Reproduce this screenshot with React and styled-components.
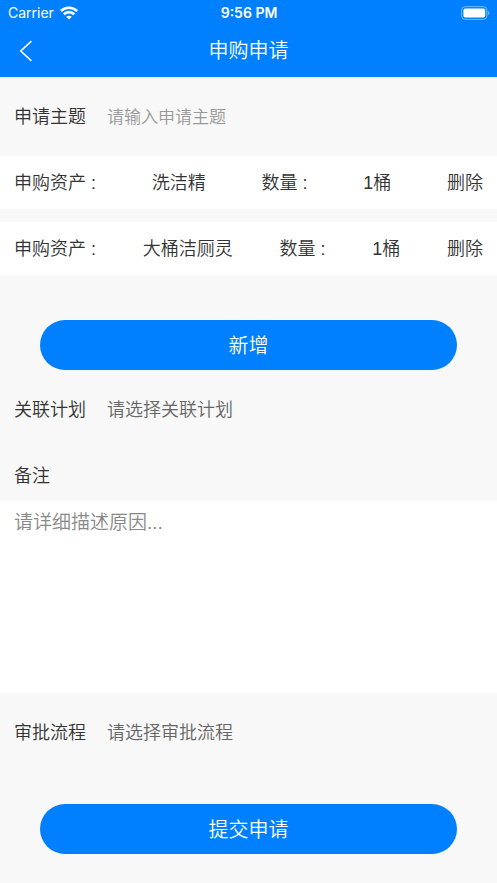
import { useState } from 'react';
import styled, { createGlobalStyle } from 'styled-components';



const GlobalStyle = createGlobalStyle`
    * {
        box-sizing: border-box;
    }
    body {
        margin: 0;
        background: #f8f8f8;
    }
    body, button, input, select, textarea {
        font-family: "Liberation Sans", "Noto Sans CJK SC", sans-serif;
        font-weight: 350;
        color: #333;
    }
`;

const Page = styled.div`
    display: flex;
    flex-direction: column;
    min-height: 100vh;
`;

const Header = styled.header`
    background: #0080ff;
    color: #fff;
`;

const StatusBar = styled.div`
    display: grid;
    grid-template-columns: 1fr auto 1fr;
    align-items: center;
    height: 25px;
    padding: 0 7px 0 8px;
    font-family: Inter, sans-serif;
    font-size: 14px;
    font-weight: 400;
    line-height: 20px;
`;

const Carrier = styled.div`
    display: flex;
    align-items: center;
    gap: 6px;
`;

const Time = styled.span`
    font-weight: 600;
`;

const BatteryIcon = styled.svg`
    justify-self: end;
`;

const NavBar = styled.div`
    display: grid;
    grid-template-columns: 52px 1fr 52px;
    align-items: center;
    height: 52px;
`;

const BackButton = styled.button`
    display: flex;
    justify-content: center;
    align-items: center;
    height: 100%;
    padding: 0;
    border: none;
    background: none;
    color: #fff;
`;

const Title = styled.h1`
    margin: 0;
    font-size: 20px;
    font-weight: 350;
    line-height: 28px;
    text-align: center;
`;

const Form = styled.form`
    display: flex;
    flex-direction: column;
    padding: 0 0 29px 0;
`;

const Field = styled.div`
    display: flex;
    align-items: center;
    gap: 21px;
    height: ${({ $short }) => $short ? '52px' : '79px'};
    padding: 1px 14px 0 14px;
`;

const Label = styled.label`
    flex: 0 0 auto;
    font-size: 18px;
    line-height: 26px;
`;

const TextInput = styled.input`
    flex: 1 1 auto;
    min-width: 0;
    padding: 1px 0 0 0;
    border: none;
    outline: none;
    background: none;
    font-size: 17px;
    line-height: 26px;
    &::placeholder {
        color: #999;
    }
`;

const Picker = styled.select`
    flex: 1 1 auto;
    min-width: 0;
    padding: 0;
    border: none;
    outline: none;
    appearance: none;
    background: none;
    color: #666;
    font-size: 18px;
    line-height: 26px;
`;

const AssetList = styled.ul`
    display: flex;
    flex-direction: column;
    gap: 13px;
    margin: 0;
    padding: 0;
    list-style: none;
`;

const AssetRow = styled.li`
    display: flex;
    justify-content: space-between;
    align-items: center;
    height: 53px;
    padding: 0 14px;
    background: #fff;
    font-size: 18px;
    line-height: 26px;
`;

const DeleteButton = styled.button`
    padding: 0;
    border: none;
    background: none;
    font-size: 18px;
    line-height: 26px;
`;

const MainButton = styled.button`
    height: 50px;
    margin: ${({ $top }) => $top}px 40px 0 40px;
    padding: 2px 0 0 0;
    border: none;
    border-radius: 25px;
    background: #0080ff;
    color: #fff;
    font-size: 20px;
    line-height: 28px;
`;

const Remark = styled.textarea`
    display: block;
    width: 100%;
    height: 192px;
    padding: 8px 14px;
    border: none;
    outline: none;
    resize: none;
    background: #fff;
    font-size: 19px;
    line-height: 28px;
    &::placeholder {
        color: #888;
    }
`;



const initialAssets = [
    { id: 1, name: '洗洁精', amount: '1桶' },
    { id: 2, name: '大桶洁厕灵', amount: '1桶' }
];

const App = () => {
    const [assets, setAssets] = useState(initialAssets);

    const removeAsset = id => setAssets(assets.filter(asset => asset.id !== id));

    return (
        <Page>
            <GlobalStyle />
            <Header>
                <StatusBar>
                    <Carrier>
                        Carrier
                        <svg width="18" height="14" viewBox="0 0 18 14" fill="none" stroke="#fff" strokeWidth="2.6">
                            <path d="M0.9 5C5.4 0.6 12.6 0.6 17.1 5" />
                            <path d="M3.7 8.3C6.7 5.4 11.3 5.4 14.3 8.3" />
                            <path d="M9 13.6L6.2 10.8C7.8 9.4 10.2 9.4 11.8 10.8Z" fill="#fff" stroke="none" />
                        </svg>
                    </Carrier>
                    <Time>9:56 PM</Time>
                    <BatteryIcon width="29" height="14" viewBox="0 0 29 14" fill="none">
                        <rect x="0.6" y="0.6" width="25.3" height="12.8" rx="3.6" stroke="#fff" strokeOpacity="0.45" />
                        <rect x="2.4" y="2.4" width="21.8" height="9.2" rx="2" fill="#fff" />
                        <path d="M27.2 4.8C28.9 5.6 28.9 8.4 27.2 9.2Z" fill="#fff" fillOpacity="0.5" />
                    </BatteryIcon>
                </StatusBar>
                <NavBar>
                    <BackButton type="button" aria-label="返回">
                        <svg width="14" height="22" viewBox="0 0 14 22" fill="none" stroke="currentColor" strokeWidth="1.6">
                            <path d="M12.4 1.2L1.8 11L12.4 20.8" />
                        </svg>
                    </BackButton>
                    <Title>申购申请</Title>
                </NavBar>
            </Header>
            <Form onSubmit={e => e.preventDefault()}>
                <Field>
                    <Label htmlFor="subject">申请主题</Label>
                    <TextInput id="subject" type="text" placeholder="请输入申请主题" />
                </Field>
                <AssetList>
                    {
                        assets.map(({ id, name, amount }) => (
                            <AssetRow key={id}>
                                <span>申购资产 :</span>
                                <span>{name}</span>
                                <span>数量 :</span>
                                <span>{amount}</span>
                                <DeleteButton type="button" onClick={() => removeAsset(id)}>
                                    删除
                                </DeleteButton>
                            </AssetRow>
                        ))
                    }
                </AssetList>
                <MainButton type="button" $top={45}>新增</MainButton>
                <Field>
                    <Label htmlFor="plan">关联计划</Label>
                    <Picker id="plan" defaultValue="">
                        <option value="">请选择关联计划</option>
                    </Picker>
                </Field>
                <Field $short>
                    <Label htmlFor="remark">备注</Label>
                </Field>
                <Remark id="remark" placeholder="请详细描述原因..." />
                <Field>
                    <Label htmlFor="flow">审批流程</Label>
                    <Picker id="flow" defaultValue="">
                        <option value="">请选择审批流程</option>
                    </Picker>
                </Field>
                <MainButton type="submit" $top={32}>提交申请</MainButton>
            </Form>
        </Page>
    )
}



export default App;
